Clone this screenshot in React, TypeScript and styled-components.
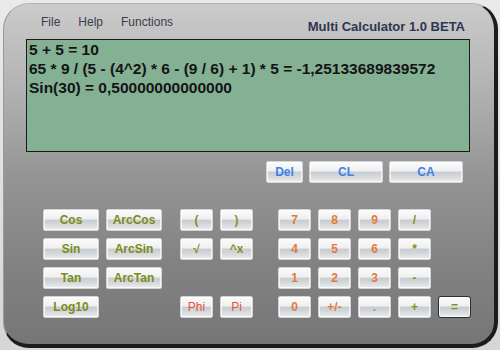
import styled, { createGlobalStyle } from "styled-components";

const GlobalStyle = createGlobalStyle`
  html, body {
    margin: 0;
    padding: 0;
    background: #e2e2e2;
    font-family: "Liberation Sans", Arial, sans-serif;
  }
`;

const Page = styled.div`
  width: 500px;
  height: 350px;
  box-sizing: border-box;
  padding: 3px 2px 2px 3px;
  background: linear-gradient(to bottom, #eaeaea, #d6d6d6);
`;

const Window = styled.div`
  box-sizing: border-box;
  height: 345px;
  border-radius: 26px;
  border-top: 1px solid #b4b4b4;
  border-left: 1px solid #9a9a9a;
  border-right: 4px solid #1c1c1c;
  border-bottom: 4px solid #1c1c1c;
  background: linear-gradient(
    to bottom,
    #cbcbcb 0%,
    #b2b2b2 25%,
    #959595 50%,
    #838383 75%,
    #767676 100%
  );
  display: flex;
  flex-direction: column;
`;

const Header = styled.div`
  height: 35px;
  display: flex;
  justify-content: space-between;
  padding: 0 29px 0 37px;
`;

const Menu = styled.div`
  display: flex;
  gap: 18px;
  padding-top: 11px;
`;

const MenuItem = styled.span`
  font-size: 12px;
  color: #3c3c4a;
`;

const Title = styled.div`
  padding-top: 15px;
  font-size: 13px;
  font-weight: bold;
  color: #2f3652;
`;

const Display = styled.div`
  margin-left: 22px;
  width: 444px;
  height: 113px;
  box-sizing: border-box;
  border: 1px solid #1a1a1a;
  background: #84b094;
  padding: 0 2px;
  font-size: 15.5px;
  font-weight: bold;
  line-height: 19px;
  color: #141414;
`;

const Line = styled.div`
  white-space: nowrap;
`;

const EditRow = styled.div`
  display: flex;
  gap: 6px;
  margin: 9px 0 0 262px;
`;

const Keypad = styled.div`
  display: flex;
  margin: 26px 0 0 39px;
`;

const Group = styled.div<{ $cols: number; $w: number; $gap: number }>`
  display: grid;
  grid-template-columns: repeat(${(p) => p.$cols}, ${(p) => p.$w}px);
  grid-auto-rows: 22px;
  gap: 7px;
  margin-right: ${(p) => p.$gap}px;
`;

const Key = styled.button<{ $color: string; $w?: number; $bold?: boolean; $def?: boolean }>`
  box-sizing: border-box;
  width: ${(p) => (p.$w ? `${p.$w}px` : "100%")};
  height: 22px;
  padding: 0;
  margin: 0;
  border: 1px solid ${(p) => (p.$def ? "#2a2e34" : "#d2d4d6")};
  border-radius: ${(p) => (p.$def ? "3px" : "2px")};
  background: linear-gradient(
    to bottom,
    #fbfbfb 0%,
    #f0f0f0 44%,
    #c8cdd2 52%,
    #d6dadd 75%,
    #eceef0 100%
  );
  box-shadow: inset 0 0 0 1px rgba(255, 255, 255, 0.7);
  font-family: "Liberation Sans", Arial, sans-serif;
  font-size: 12px;
  font-weight: ${(p) => (p.$bold === false ? "normal" : "bold")};
  color: ${(p) => p.$color};
  line-height: 20px;
  text-align: center;
`;

const Empty = styled.div``;

const FUNC = "#7c8c18";
const DIGIT = "#e47a3c";
const CONST = "#e2543a";
const OP = "#8a8e22";
const BLUE = "#3c82ea";

export default function App() {
  return (
    <>
      <GlobalStyle />
      <Page>
        <Window>
          <Header>
            <Menu>
              <MenuItem>File</MenuItem>
              <MenuItem>Help</MenuItem>
              <MenuItem>Functions</MenuItem>
            </Menu>
            <Title>Multi Calculator 1.0 BETA</Title>
          </Header>
          <Display>
            <Line>5 + 5 = 10</Line>
            <Line>65 * 9 / (5 - (4^2) * 6 - (9 / 6) + 1) * 5 = -1,25133689839572</Line>
            <Line>Sin(30) = 0,50000000000000</Line>
          </Display>
          <EditRow>
            <Key $color={BLUE} $w={37}>Del</Key>
            <Key $color={BLUE} $w={74}>CL</Key>
            <Key $color={BLUE} $w={74}>CA</Key>
          </EditRow>
          <Keypad>
            <Group $cols={2} $w={56} $gap={18}>
              <Key $color={FUNC}>Cos</Key>
              <Key $color={FUNC}>ArcCos</Key>
              <Key $color={FUNC}>Sin</Key>
              <Key $color={FUNC}>ArcSin</Key>
              <Key $color={FUNC}>Tan</Key>
              <Key $color={FUNC}>ArcTan</Key>
              <Key $color={FUNC}>Log10</Key>
              <Empty />
            </Group>
            <Group $cols={2} $w={33} $gap={25}>
              <Key $color={OP}>(</Key>
              <Key $color={OP}>)</Key>
              <Key $color={OP}>√</Key>
              <Key $color={OP}>^x</Key>
              <Empty />
              <Empty />
              <Key $color={CONST} $bold={false}>Phi</Key>
              <Key $color={CONST} $bold={false}>Pi</Key>
            </Group>
            <Group $cols={5} $w={33} $gap={0}>
              <Key $color={DIGIT}>7</Key>
              <Key $color={DIGIT}>8</Key>
              <Key $color={DIGIT}>9</Key>
              <Key $color={OP}>/</Key>
              <Empty />
              <Key $color={DIGIT}>4</Key>
              <Key $color={DIGIT}>5</Key>
              <Key $color={DIGIT}>6</Key>
              <Key $color={OP}>*</Key>
              <Empty />
              <Key $color={DIGIT}>1</Key>
              <Key $color={DIGIT}>2</Key>
              <Key $color={DIGIT}>3</Key>
              <Key $color={OP}>-</Key>
              <Empty />
              <Key $color={DIGIT}>0</Key>
              <Key $color={DIGIT}>+/-</Key>
              <Key $color="#9a9a7a">.</Key>
              <Key $color={OP}>+</Key>
              <Key $color={OP} $def>=</Key>
            </Group>
          </Keypad>
        </Window>
      </Page>
    </>
  );
}
